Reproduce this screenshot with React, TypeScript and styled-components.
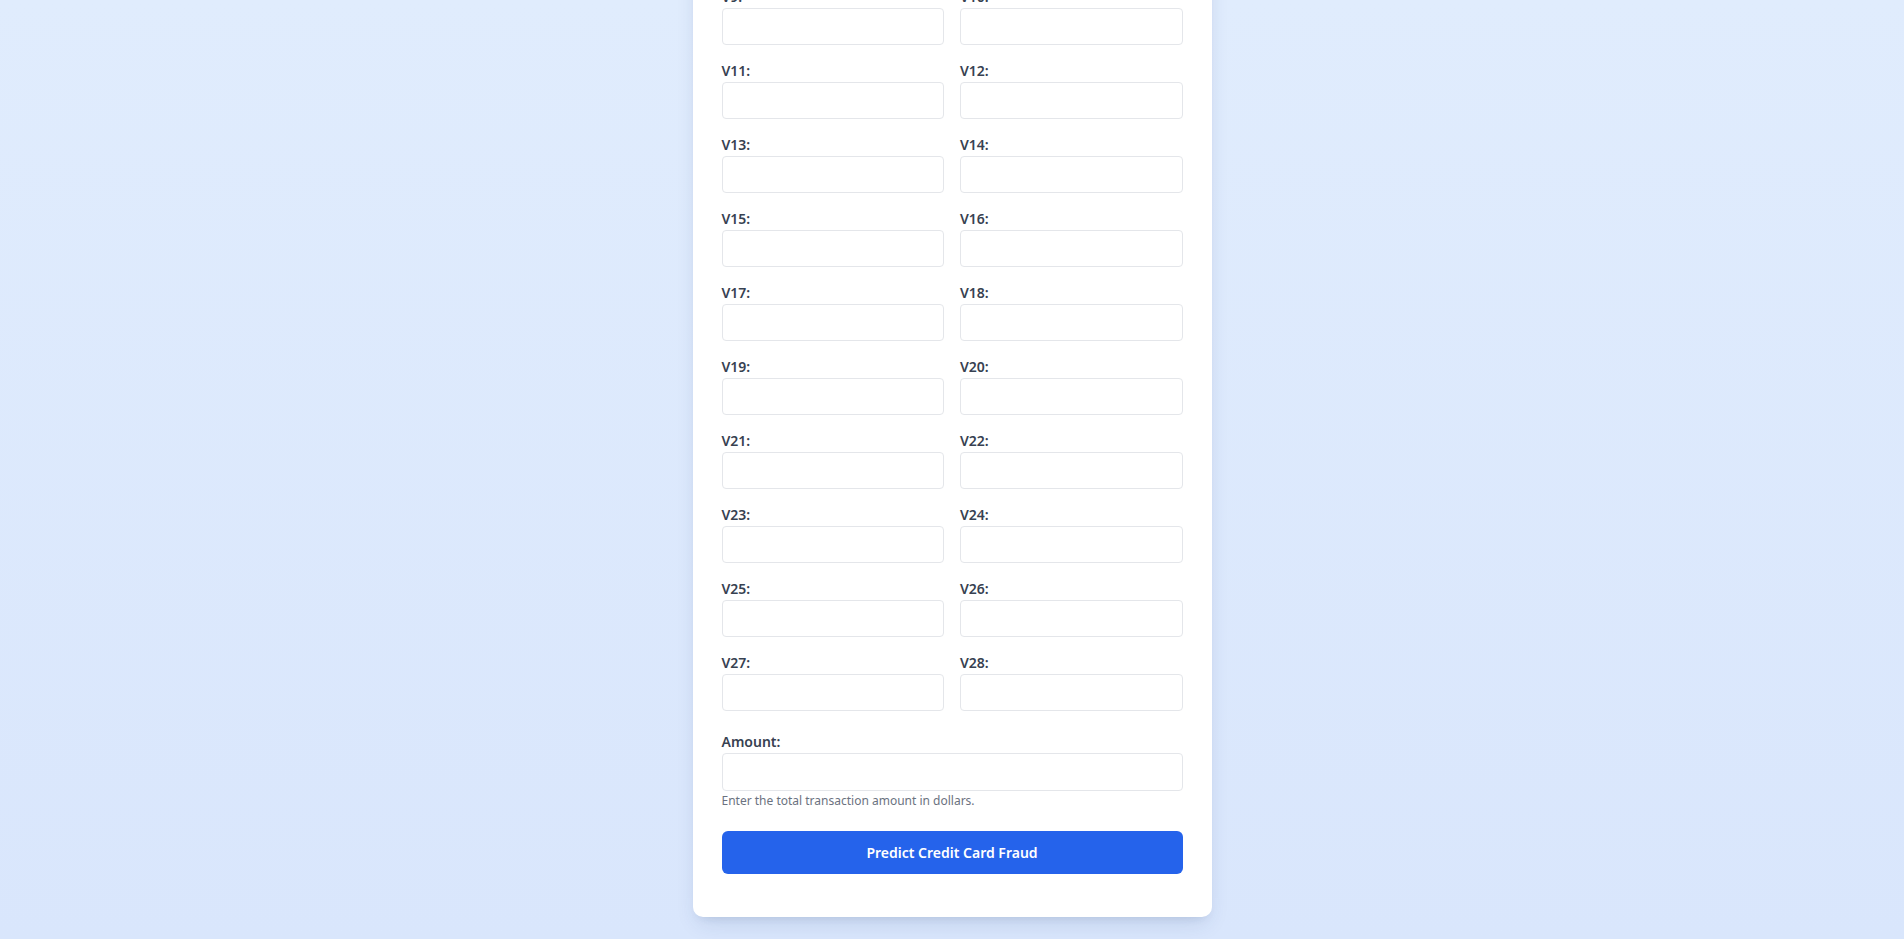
import React from "react";
import styled, { createGlobalStyle } from "styled-components";

const GlobalStyle = createGlobalStyle`
  * { box-sizing: border-box; }
  html, body { margin: 0; padding: 0; height: 100%; overflow: hidden; }
  body {
    font-family: "Noto Sans", "Open Sans", sans-serif;
    background: #dce9fc;
  }
`;

const Page = styled.div`
  height: 100vh;
  overflow: hidden;
  display: flex;
  flex-direction: column;
  justify-content: flex-end;
  align-items: center;
  padding: 0 0 22px 0;
  background: linear-gradient(180deg, #e0ecfd 0%, #d9e6fc 100%);
`;

const Card = styled.div`
  flex-shrink: 0;
  width: 519px;
  background: #ffffff;
  border-radius: 10px;
  padding: 29px 29px 43px;
  box-shadow: 0 10px 22px -5px rgba(30, 58, 110, 0.14),
    0 6px 10px -6px rgba(30, 58, 110, 0.12);
`;

const Title = styled.h1`
  margin: 0 0 24px;
  font-size: 24px;
  font-weight: 700;
  color: #1f2937;
  text-align: center;
`;

const Grid = styled.div`
  display: grid;
  grid-template-columns: 1fr 1fr;
  column-gap: 16px;
  row-gap: 15.5px;
  margin-bottom: 21px;
`;

const Field = styled.div`
  display: flex;
  flex-direction: column;
`;

const Label = styled.label`
  display: block;
  font-size: 14px;
  line-height: 20px;
  font-weight: 600;
  color: #374151;
  margin-bottom: 1px;
`;

const Input = styled.input`
  display: block;
  width: 100%;
  height: 37.5px;
  padding: 8px 12px;
  border: 1px solid #e4e6ea;
  border-radius: 4px;
  background: #ffffff;
  font-family: inherit;
  font-size: 14px;
  outline: none;
`;

const Help = styled.p`
  margin: 2.5px 0 0;
  font-size: 12px;
  line-height: 16px;
  color: #6b7280;
`;

const Button = styled.button`
  display: block;
  width: 100%;
  height: 43px;
  margin-top: 22px;
  border: none;
  border-radius: 6px;
  background: #2563eb;
  color: #ffffff;
  font-family: inherit;
  font-size: 14px;
  font-weight: 600;
  cursor: pointer;
`;

const fields = Array.from({ length: 28 }, (_, i) => `V${i + 1}`);

export default function App() {
  return (
    <>
      <GlobalStyle />
      <Page>
        <Card>
          <Title>Credit Card Fraud Detection</Title>
          <Grid>
            <Field>
              <Label>Time:</Label>
              <Input type="text" />
            </Field>
            <Field />
            {fields.map((f) => (
              <Field key={f}>
                <Label>{f}:</Label>
                <Input type="text" />
              </Field>
            ))}
          </Grid>
          <Field>
            <Label>Amount:</Label>
            <Input type="text" />
            <Help>Enter the total transaction amount in dollars.</Help>
          </Field>
          <Button type="button">Predict Credit Card Fraud</Button>
        </Card>
      </Page>
    </>
  );
}
